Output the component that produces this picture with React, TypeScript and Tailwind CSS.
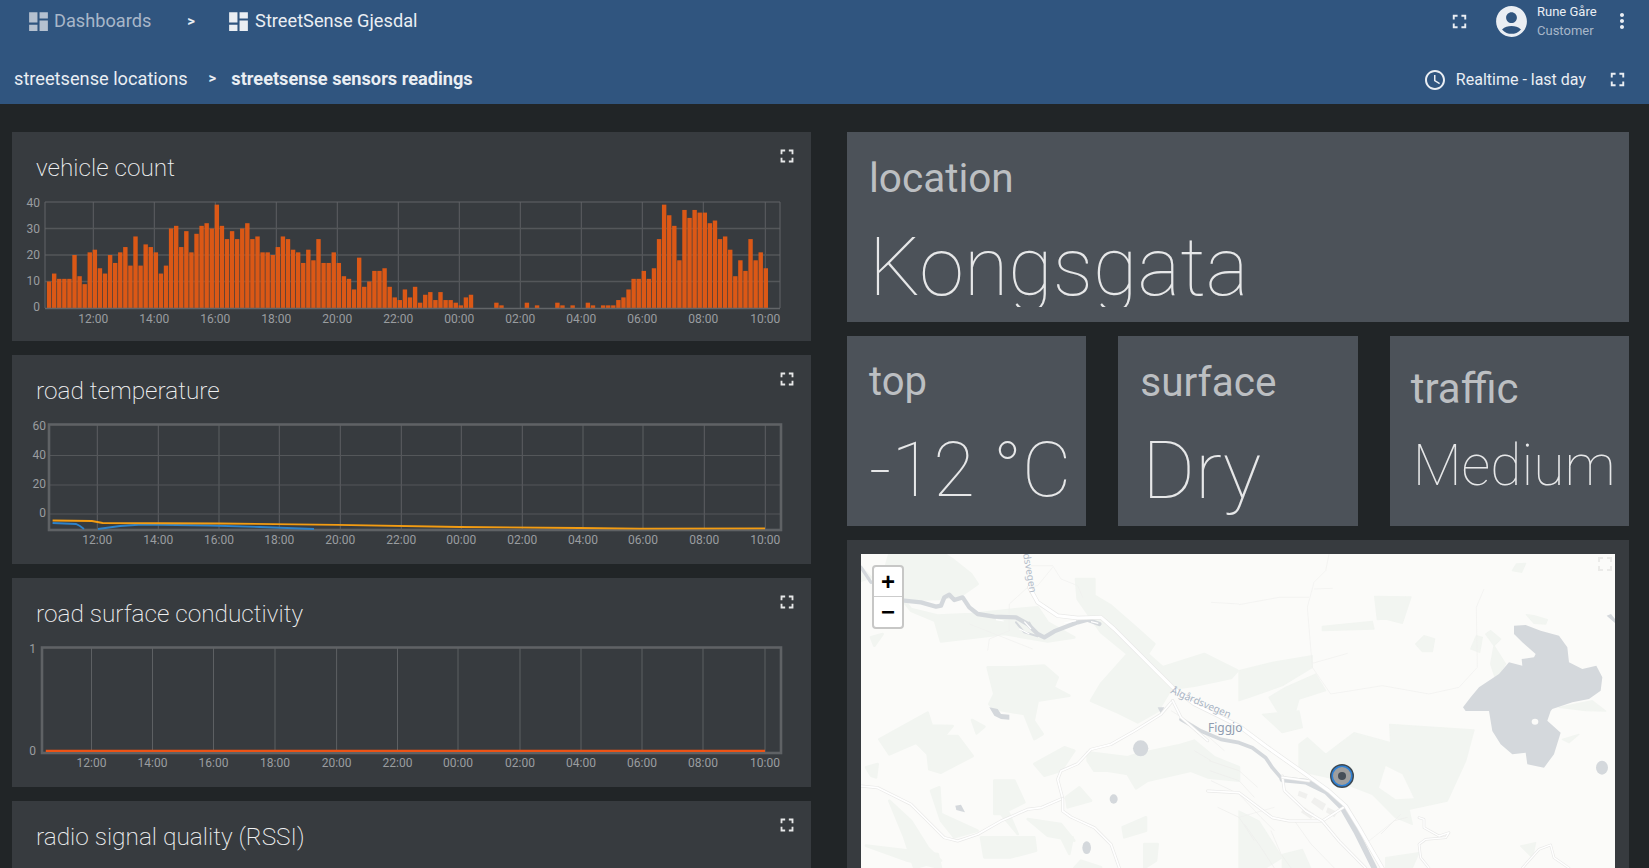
import React from "react";
import { MdDashboard, MdFullscreen, MdAccountCircle, MdMoreVert, MdAccessTime } from "react-icons/md";

const BAR_VALUES = [10,13,11,11,11,20,12,9,21,22,15,13,20,17,21,23,16,27,16,24,23,21,13,16,30,31,23,29,21,28,31,32,30,39,31,26,29,26,30,32,26,27,21,21,20,23,27,26,22,21,17,22,18,26,17,17,21,17,12,11,7,19,8,10,14,14,15,8,4,3,7,4,8,2,5,6,3,6,3,3,2,1,4,5,0,0,0,0,2,1,0,0,0,0,2,0,1,0,0,0,2,1,0,1,0,0,2,1,0,1,1,1,3,4,7,11,11,14,11,15,26,39,35,31,18,37,34,37,36,36,32,33,26,27,22,12,18,14,26,18,21,15];
const HOURS = ["12:00","14:00","16:00","18:00","20:00","22:00","00:00","02:00","04:00","06:00","08:00","10:00"];

function XAxis({ xs, top, bottom, label }: { xs: number[]; top: number; bottom: number; label: number }) {
  return (
    <g>
      {xs.map((x, i) => (
        <g key={x}>
          <line x1={x} x2={x} y1={top} y2={bottom} stroke="#5d6063" strokeWidth={1} />
          <text x={x} y={label} textAnchor="middle" fontSize={12} fill="#9a9da0">{HOURS[i]}</text>
        </g>
      ))}
    </g>
  );
}

function YLabel({ x, y, t }: { x: number; y: number; t: string }) {
  return <text x={x} y={y + 4} textAnchor="end" fontSize={12} fill="#9a9da0">{t}</text>;
}

function VehicleChart() {
  const xs = [93.3,154.3,215.3,276.3,337.3,398.3,459.3,520.3,581.3,642.3,703.3,765.3];
  return (
    <svg viewBox="12 188 799 153" className="block h-[153px] w-[799px]">
      <XAxis xs={xs} top={202} bottom={308} label={323} />
      {[228.5,255,281.5].map((y) => <line key={y} x1={45} x2={780} y1={y} y2={y} stroke="#54575a" strokeWidth={1.5} />)}
      <line x1={45} x2={780} y1={202} y2={202} stroke="#626568" />
      <line x1={45} x2={45} y1={202} y2={308} stroke="#626568" />
      <line x1={780} x2={780} y1={202} y2={308} stroke="#626568" />
      {BAR_VALUES.map((v, i) => v > 0 && (
        <rect key={i} x={46.9 + i * 5.083} y={308 - v * 2.65} width={4.4} height={v * 2.65} fill="#e25915" fillOpacity={0.96} />
      ))}
      <line x1={45} x2={780} y1={308.5} y2={308.5} stroke="#626568" strokeWidth={1.5} />
      <YLabel x={40} y={203} t="40" />
      <YLabel x={40} y={229} t="30" />
      <YLabel x={40} y={255} t="20" />
      <YLabel x={40} y={281} t="10" />
      <YLabel x={40} y={307} t="0" />
    </svg>
  );
}

function TemperatureChart() {
  const xs = [97.3,158.3,219,279.3,340.3,401.3,461.3,522.3,583,643,704.3,765.3];
  return (
    <svg viewBox="12 411 799 153" className="block h-[153px] w-[799px]">
      <XAxis xs={xs} top={424} bottom={530} label={544} />
      {[455.5,485,514].map((y) => <line key={y} x1={49} x2={781} y1={y} y2={y} stroke="#54575a" strokeWidth={1.2} />)}
      <rect x={49} y={424.5} width={732} height={105.5} fill="none" stroke="#5f6265" strokeWidth={2.6} />
      <polyline points="52.6,523 76,524 80,526 84,529" fill="none" stroke="#2e82c9" strokeWidth={1.8} />
      <polyline points="98,529 120,526 142,524.5 210,525.5 260,527 314,529" fill="none" stroke="#2e82c9" strokeWidth={1.8} />
      <polyline points="52.6,520.5 92,521 102.6,523 220,523.5 337,524.8 460,527 579,528 640,528.6 765,528.3" fill="none" stroke="#f39c12" strokeWidth={1.8} />
      <YLabel x={46} y={426} t="60" />
      <YLabel x={46} y={455} t="40" />
      <YLabel x={46} y={484} t="20" />
      <YLabel x={46} y={513} t="0" />
    </svg>
  );
}

function ConductivityChart() {
  const xs = [91.5,152.5,213.5,275,336.6,397.5,458,520,581,642,703,765];
  return (
    <svg viewBox="12 634 799 153" className="block h-[153px] w-[799px]">
      <XAxis xs={xs} top={647} bottom={753} label={767} />
      <rect x={42} y={647.5} width={739} height={105.5} fill="none" stroke="#5f6265" strokeWidth={2.6} />
      <line x1={45.8} x2={765} y1={750.8} y2={750.8} stroke="#ed5316" strokeWidth={2.2} />
      <YLabel x={36} y={649} t="1" />
      <YLabel x={36} y={751} t="0" />
    </svg>
  );
}

function ChartCard({ title, children }: { title: string; children?: React.ReactNode }) {
  return (
    <div className="relative h-[209px] w-[799px] shrink-0 bg-[#373b3f]">
      <div className="h-[56px] pl-6 pt-[20px] text-[24.4px] leading-[32px] font-extralight text-[#f0f1f2]">{title}</div>
      <MdFullscreen className="absolute right-[13px] top-[13px] text-[#e6e7e8]" size={22} />
      {children}
    </div>
  );
}

function Stat({ label, value, valueClass, labelClass }: { label: string; value: string; valueClass: string; labelClass: string }) {
  return (
    <div className="h-[190px] overflow-hidden bg-[#4c5259]">
      <div className={"text-[#bcbfc2] " + labelClass}>{label}</div>
      <div className={"text-[#e6e7e8] " + valueClass}>{value}</div>
    </div>
  );
}

const GREEN = "#f2f5f1";
const WATER = "#d4d8dc";
const THIN = "#f0f0ee";
const STREET = "#ededeb";

function Road({ d, w = 9 }: { d: string; w?: number }) {
  return (
    <g fill="none" strokeLinejoin="round" strokeLinecap="round">
      <path d={d} stroke="#e9e9e8" strokeWidth={w + 4} />
      <path d={d} stroke="#ffffff" strokeWidth={w} />
    </g>
  );
}

function MapArt() {
  return (
    <svg viewBox="0 0 756 314" className="block h-[314px] w-[756px]">
      <g transform="scale(0.33333)">
        <g fill={GREEN} stroke={GREEN} strokeWidth={8} strokeLinejoin="round" className="blur-[1px]">
          <path d="M85,0 L250,0 L280,20 L330,60 L350,90 L300,125 L235,135 L130,138 L150,165 L230,185 L330,180 L470,165 L530,160 L560,205 L640,250 L560,262 L430,240 L240,262 L222,200 L150,170 L110,120 L60,90 Z" />
          <path d="M645,75 L700,75 L700,125 L750,155 L830,225 L880,270 L860,300 L905,340 L1030,300 L1130,350 L1110,372 L1000,395 L930,405 L890,471 L830,505 L770,475 L690,440 L720,390 L800,300 L720,235 L650,135 Z" />
          <path d="M680,595 L800,610 L830,600 L950,575 L1000,560 L1060,610 L1134,640 L1134,680 L1040,670 L990,650 L860,680 L825,703 L800,660 L740,650 L700,650 L680,620 Z" />
          <path d="M380,340 L460,340 L550,335 L590,370 L578,400 L625,425 L530,440 L518,500 L545,540 L520,555 L490,480 L400,465 L385,450 L400,420 Z" />
          <path d="M30,250 L65,240 L40,275 Z" />
          <path d="M55,556 L200,476 L212,515 L275,516 L250,546 L290,546 L335,606 L240,656 L205,646 L200,600 L165,566 L85,601 Z" />
          <path d="M333,498 L370,518 L347,538 Z" />
          <path d="M15,640 L50,630 L45,670 L30,665 Z" />
          <path d="M520,630 L610,580 L640,590 L600,650 L550,665 Z" />
          <path d="M400,680 L460,680 L490,745 L440,770 L470,840 L420,780 L400,780 Z" />
          <path d="M210,710 L235,700 L240,780 L350,830 L280,850 L240,800 Z" />
          <path d="M85,740 L150,800 L200,880 L240,920 L160,942 L130,850 Z" />
          <path d="M15,875 L230,900 L240,942 L140,920 Z" />
          <path d="M360,850 L520,850 L525,890 L450,910 L370,910 Z" />
          <path d="M500,795 L600,810 L640,860 L560,845 Z" />
          <path d="M600,850 L635,850 L625,900 Z" />
          <path d="M785,820 L855,790 L855,830 L790,850 Z" />
          <path d="M850,870 L890,870 L885,920 L850,942 Z" />
          <path d="M615,730 L655,700 L690,740 L620,760 Z" />
          <path d="M660,920 L720,940 L640,942 Z" />
          <path d="M0,40 L30,70 L0,80 Z" />
        </g>
        <g transform="translate(1134,0)" fill={GREEN} stroke={GREEN} strokeWidth={4} strokeLinejoin="round" className="blur-[1px]">
          <path d="M407,127 L516,129 L490,208 L440,195 L415,197 Z" />
          <path d="M250,217 L400,202 L405,225 L250,230 Z" />
          <path d="M530,270 L555,245 L587,255 L580,293 L550,293 Z" />
          <path d="M820,50 L832,30 L860,28 L848,55 Z" />
          <path d="M862,182 L885,185 L925,197 L920,210 L885,208 Z" />
          <path d="M740,240 L755,230 L785,255 L765,275 Z" />
          <path d="M765,275 L800,330 L770,375 L755,330 Z" />
          <path d="M695,285 L712,245 L730,250 L722,295 Z" />
          <path d="M0,350 L100,325 L220,305 L220,340 L130,395 L30,430 L0,440 Z" />
          <path d="M90,430 L140,400 L230,360 L260,410 L180,435 L170,471 L120,480 Z" />
          <path d="M960,460 L1060,440 L1100,471 L1040,470 Z" />
        </g>
        <g transform="translate(1134,471)" fill={GREEN} stroke={GREEN} strokeWidth={4} strokeLinejoin="round" className="blur-[1px]">
          <path d="M70,10 L180,0 L190,50 L130,65 Z" />
          <path d="M180,100 L205,80 L260,130 L345,65 L455,95 L452,40 L705,57 L680,150 L625,270 L510,295 L520,340 L470,320 L400,250 L270,200 L180,180 Z" />
          <path d="M970,85 L1020,70 L990,95 Z" />
          <path d="M130,430 L190,415 L215,471 L130,471 Z" />
          <path d="M440,440 L540,425 L520,471 L440,471 Z" />
          <path d="M845,405 L890,395 L880,440 Z" />
          <path d="M0,300 L60,330 L130,440 L80,471 L0,471 Z" />
        </g>
        <path transform="translate(1134,471)" d="M420,230 L440,165 L490,190 L525,262 L470,265 Z" fill="#fbfbf9" />
        <g fill="none" stroke={THIN} strokeWidth={2}>
          <path d="M1404,0 L1394,50 L1359,85 L1339,160 L1354,340 L1409,420 L1564,395 L1704,420 L1794,400 L1849,340 L1846,160 L1869,105" />
          <path d="M1134,152 L1254,130 L1344,130" />
          <path d="M1359,105 L1415,103" />
          <path d="M1354,328 L1460,298" />
          <path d="M510,35 L575,35 L600,75 L650,95 L665,130" />
          <path d="M575,40 L530,95 L500,100 L445,150 L445,230 L385,255 L380,290" />
          <path d="M325,210 L515,285" />
          <path d="M1050,145 L1134,150" />
          <path d="M1134,790 L1240,760" />
          <path d="M1500,880 L1600,800 L1620,780" />
        </g>
        <g fill="none" stroke={STREET} strokeWidth={2}>
          <path d="M1044,620 L1134,650 L1190,700" />
          <path d="M1046,650 L1134,680 L1180,730" />
          <path d="M1050,680 L1134,720 L1200,790 L1240,830" />
          <path d="M1070,760 L1134,790 L1180,860" />
          <path d="M1230,830 L1260,900 L1290,942" />
          <path d="M1150,810 L1200,880 L1240,942" />
          <path d="M1300,800 L1350,870 L1420,942" />
          <path d="M930,470 L1010,520 L1090,590" />
          <path d="M1000,590 L1050,620" />
          <path d="M1560,840 L1600,800 L1640,790" />
        </g>
        <g fill="#f0f0ee">
          <path d="M1314,710 L1340,720 L1335,735 L1310,725 Z" />
          <path d="M1360,730 L1395,750 L1385,770 L1350,745 Z" />
          <path d="M1400,760 L1430,775 L1420,790 L1395,775 Z" />
          <path d="M1330,760 L1360,780 L1350,795 L1320,775 Z" />
        </g>
        <g fill={WATER}>
          <path d="M1959,215 L1994,213 L2039,230 L2094,245 L2119,280 L2124,325 L2164,345 L2206,335 L2224,370 L2219,410 L2184,435 L2134,445 L2074,465 L2069,471 L2059,500 L2099,536 L2079,601 L2049,641 L1999,631 L1994,596 L1954,601 L1919,571 L1894,531 L1884,471 L1814,471 L1806,460 L1829,430 L1854,400 L1914,360 L1944,325 L1984,335 L1982,315 L2019,310 L2024,300 L1984,265 L1959,240 Z" />
          <path d="M2237,185 L2250,180 L2262,195 L2262,207 Z" />
          <path d="M2205,641 a18,21 0 1,0 36,0 a18,21 0 1,0 -36,0 Z" />
          <path d="M816,583 a23,24 0 1,0 46,0 a23,24 0 1,0 -46,0 Z" />
          <path d="M746,735 a12,14 0 1,0 24,0 a12,14 0 1,0 -24,0 Z" />
          <path d="M664,881 a13,19 0 1,0 26,0 a13,19 0 1,0 -26,0 Z" />
          <path d="M283,755 L300,752 L312,775 L300,772 L286,768 Z" />
          <path d="M385,460 L410,465 L420,480 L445,482 L445,497 L420,495 L400,485 Z" />
          <path d="M890,460 L910,460 L900,480 Z" />
        </g>
        <ellipse cx={2022} cy={503} rx={10} ry={9} fill="#fbfbf9" />
        <g fill="none" stroke={WATER} strokeLinecap="round" strokeLinejoin="round">
          <path d="M0,40 L30,85" strokeWidth={10} />
          <path d="M130,140 L180,145 L225,158 L240,155 L250,130 L265,122 L280,138 L305,130 L325,160 L350,180 L400,188 L465,190 L500,210 L530,240 L550,250 L580,232 L650,205 L680,197 L715,210" strokeWidth={13} />
          <path d="M465,205 L490,235 L530,247" strokeWidth={6} />
          <path d="M505,205 L520,232" strokeWidth={5} />
          <path d="M960,496 L1020,531 L1080,556 L1134,566 L1174,581 L1214,611 L1234,641 L1264,676" strokeWidth={11} />
          <path d="M1264,676 L1335,683 L1395,712 L1445,762 L1485,832 L1540,942" strokeWidth={17} />
        </g>
        <g fill="none" stroke="#ffffff" strokeWidth={3.5}>
          <path d="M405,197 L428,201" />
          <path d="M475,224 L505,240" />
          <path d="M610,207 L645,200" />
          <path d="M690,203 L712,208" />
          <path d="M490,203 L510,225" />
        </g>
        <Road d="M0,696 L50,701 L150,751 L200,801 L250,851 L290,861 L350,841 L420,801 L500,766 L540,761 L605,733" w={5} />
        <Road d="M605,733 L590,676 L600,651 L650,629 L690,586 L750,571 L820,531 L900,481 L935,440" w={5} />
        <Road d="M605,733 L605,771 L630,789 L700,821 L750,871 L775,942" w={5} />
        <Road d="M935,440 L960,490 L1040,560" w={5} />
        <Road d="M1040,711 L1134,716 L1234,791 L1284,801 L1384,801 L1454,756" w={5} />
        <Road d="M1264,666 L1270,710 L1334,771 L1384,801 L1434,861 L1514,942" w={5} />
        <Road d="M1264,670 L1344,681" w={5} />
        <Road d="M1674,791 L1689,796 L1689,821 L1734,846 L1764,836 L1754,851 L1694,856 L1674,871 L1679,911 L1704,942" w={4} />
        <Road d="M1984,942 L2034,886 L2069,873 L2079,911 L2124,942" w={4} />
        <Road d="M505,100 L530,145 L590,185 L650,192 L720,190 L760,225 L820,285 L890,355 L935,400 L1000,450 L1134,516 L1214,576 L1334,661 L1404,711 L1454,756 L1494,821 L1534,891 L1564,942" w={9} />
      </g>
      <text x={0} y={0} transform="translate(162,0) rotate(80)" fontSize={10} fill="#b4bdca" fontFamily="'Noto Sans',sans-serif">dsvegen</text>
      <text x={0} y={0} transform="translate(309,139) rotate(23)" fontSize={10} fill="#a9b4c4" fontFamily="'Noto Sans',sans-serif">Ålgårdsvegen</text>
      <text x={347} y={178} fontSize={12} fill="#8f9cb0" fontFamily="'Noto Sans',sans-serif">Figgjo</text>
      <circle cx={481} cy={222} r={11} fill="#9e9e9e" stroke="#3f4a52" strokeWidth={2} />
      <circle cx={481} cy={222} r={9.8} fill="none" stroke="#2d7fd3" strokeWidth={1.6} />
      <circle cx={481} cy={222} r={4} fill="#454e58" />
    </svg>
  );
}

export default function App() {
  return (
    <div className="flex h-[868px] w-[1649px] flex-col overflow-hidden bg-[#212527] font-[Roboto,sans-serif]">
      <header className="h-[104px] shrink-0 bg-[#30557f] text-[#eaeef3]">
        <div className="flex h-[52px] items-start">
          <div className="flex h-[42px] items-center pl-[26px]">
            <MdDashboard size={25} className="text-[#b5c1d0]" />
            <span className="ml-[3px] text-[18.2px] text-[#a8b7c9]">Dashboards</span>
            <span className="ml-[36px] text-[15px] font-bold text-[#eaeef3]">&gt;</span>
            <MdDashboard size={25} className="ml-[31px]" />
            <span className="ml-[4px] text-[18.2px]">StreetSense Gjesdal</span>
          </div>
          <div className="ml-auto flex h-[42px] items-center">
            <MdFullscreen size={23} />
            <MdAccountCircle size={37} className="ml-[22px]" />
            <div className="ml-[7px] flex w-[64px] flex-col text-[13px] leading-[19px]">
              <span>Rune Gåre</span>
              <span className="text-[#a8b7c9]">Customer</span>
            </div>
            <MdMoreVert size={24} className="ml-[9px] mr-[15px]" />
          </div>
        </div>
        <div className="flex h-[52px] items-center pt-[1px]">
          <span className="pl-[14px] text-[18.2px]">streetsense locations</span>
          <span className="ml-[21px] text-[15px] font-bold">&gt;</span>
          <span className="ml-[15px] text-[18.2px] font-bold">streetsense sensors readings</span>
          <div className="ml-auto flex items-center pt-[2px]">
            <MdAccessTime size={24} />
            <span className="ml-[9px] text-[16px]">Realtime - last day</span>
            <MdFullscreen size={23} className="ml-[20px] mr-[20px]" />
          </div>
        </div>
      </header>
      <main className="flex gap-[36px] pl-[12px] pt-[28px]">
        <div className="flex w-[799px] flex-col gap-[14px]">
          <ChartCard title="vehicle count"><VehicleChart /></ChartCard>
          <ChartCard title="road temperature"><TemperatureChart /></ChartCard>
          <ChartCard title="road surface conductivity"><ConductivityChart /></ChartCard>
          <ChartCard title="radio signal quality (RSSI)" />
        </div>
        <div className="flex w-[782px] flex-col gap-[14px]">
          <div className="h-[190px] overflow-hidden bg-[#4c5259] pl-[22px]">
            <div className="pt-[21px] text-[40.5px] leading-[50px] text-[#bcbfc2]">location</div>
            <div className="h-[104px] overflow-hidden pt-[10px] text-[81px] leading-[110px] font-thin text-[#e6e7e8]">Kongsgata</div>
          </div>
          <div className="grid grid-cols-3 gap-[32px]">
            <Stat label="top" value="-12 °C" labelClass="pl-[22px] pt-[23px] text-[40px] leading-[46px]" valueClass="pl-[22px] pt-[20px] text-[76px] leading-[90px] font-thin" />
            <Stat label="surface" value="Dry" labelClass="pl-[22px] pt-[23px] text-[40.5px] leading-[46px]" valueClass="pl-[24px] pt-[21px] text-[80.5px] leading-[90px] font-thin" />
            <Stat label="traffic" value="Medium" labelClass="pl-[21px] pt-[30px] text-[42px] leading-[46px]" valueClass="pl-[23px] pt-[14px] text-[57px] leading-[80px] font-thin" />
          </div>
          <div className="bg-[#373b3f] px-[14px] pt-[14px]">
            <div className="relative h-[314px] w-[754px] overflow-hidden bg-[#fbfbf9]">
              <MapArt />
              <div className="absolute left-[11px] top-[11px] flex w-[32px] flex-col overflow-hidden rounded-[4px] border-2 border-[#c7c7c6] bg-white font-['Liberation_Sans',sans-serif] text-black">
                <span className="flex h-[30px] items-center justify-center border-b border-[#ccc] text-[24px] leading-none font-bold">+</span>
                <span className="flex h-[30px] items-center justify-center text-[24px] leading-none font-bold">−</span>
              </div>
              <MdFullscreen size={24} className="absolute left-[732px] top-[-2px] text-[#ebebe9]" />
            </div>
          </div>
        </div>
      </main>
    </div>
  );
}
